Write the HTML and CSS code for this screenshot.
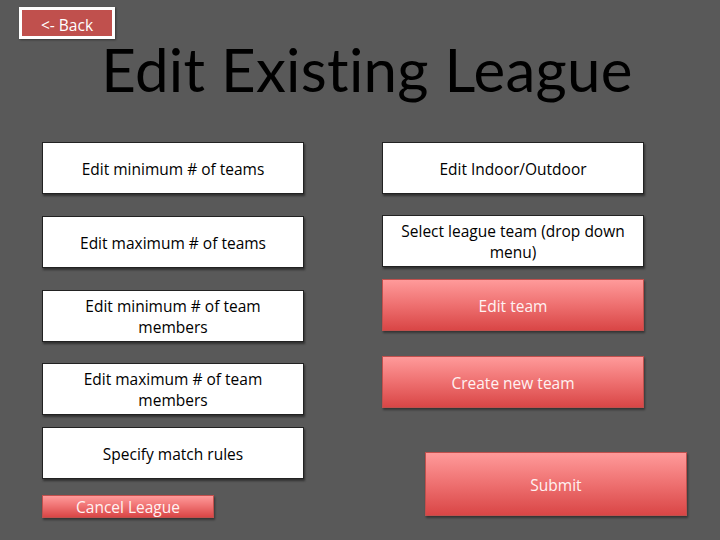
FILE: index.html
```html
<!DOCTYPE html>
<html>
<head>
<meta charset="utf-8">
<link rel="stylesheet" href="styles.css">
</head>
<body>
<div class="page">
  <div class="topbar">
    <button class="back">&lt;- Back</button>
  </div>
  <h1 class="title">Edit Existing League</h1>
  <div class="columns">
    <div class="col col-left">
      <div class="box">Edit minimum # of teams</div>
      <div class="box gap22">Edit maximum # of teams</div>
      <div class="box gap22">Edit minimum # of team<br>members</div>
      <div class="box gap21">Edit maximum # of team<br>members</div>
      <div class="box gap12">Specify match rules</div>
      <div class="cancel">Cancel League</div>
    </div>
    <div class="col col-right">
      <div class="box">Edit Indoor/Outdoor</div>
      <div class="box gap21">Select league team (drop down<br>menu)</div>
      <div class="redbtn gap12">Edit team</div>
      <div class="redbtn gap25">Create new team</div>
      <div class="redbtn submit">Submit</div>
    </div>
  </div>
</div>
</body>
</html>
```

FILE: styles.css
```css
html, body {
  margin: 0;
  padding: 0;
  background: #595959;
}
.page {
  width: 720px;
  height: 540px;
  overflow: hidden;
  font-family: "Open Sans", Lato, sans-serif;
}
.topbar {
  padding: 7px 0 0 19px;
  height: 32px;
}
.back {
  display: block;
  box-sizing: border-box;
  width: 96px;
  height: 32px;
  border: 3px solid #ffffff;
  background: #c0504d;
  color: #ffffff;
  font-family: "Open Sans", Lato, sans-serif;
  font-size: 15.5px;
  padding: 3px 0 0 0;
  box-shadow: 1px 1px 2px rgba(0,0,0,0.4);
}
.title {
  margin: 0;
  padding-left: 14px;
  height: 103px;
  line-height: 60px;
  font-family: Lato, "Open Sans", sans-serif;
  font-size: 60px;
  font-weight: normal;
  text-align: center;
  color: #000000;
  letter-spacing: 0.3px;
}
.columns {
  display: flex;
  padding-left: 42px;
  gap: 78px;
}
.col {
  display: flex;
  flex-direction: column;
  width: 262px;
}
.box {
  box-sizing: border-box;
  height: 52px;
  padding-top: 2px;
  background: #ffffff;
  border: 1px solid #222222;
  box-shadow: 1px 2px 2px rgba(0,0,0,0.45);
  display: flex;
  align-items: center;
  justify-content: center;
  text-align: center;
  font-size: 15.5px;
  line-height: 21px;
  color: #000000;
}
.gap12 { margin-top: 12px; }
.gap21 { margin-top: 21px; }
.gap22 { margin-top: 22px; }
.gap25 { margin-top: 25px; }
.redbtn {
  box-sizing: border-box;
  height: 52px;
  padding-top: 2px;
  background: linear-gradient(to bottom, #ff9a9a 0%, #ee7070 50%, #d94646 100%);
  border: 1px solid #c0504d;
  box-shadow: 1px 2px 2px rgba(0,0,0,0.4);
  display: flex;
  align-items: center;
  justify-content: center;
  font-size: 15.5px;
  color: #fff2f2;
}
.submit {
  margin-top: 44px;
  margin-left: 43px;
  width: 262px;
  height: 64px;
}
.cancel {
  box-sizing: border-box;
  margin-top: 16px;
  width: 172px;
  height: 23px;
  padding-top: 2px;
  background: linear-gradient(to bottom, #ff9a9a 0%, #ee7070 50%, #d94646 100%);
  border: 1px solid #c0504d;
  box-shadow: 1px 2px 2px rgba(0,0,0,0.4);
  display: flex;
  align-items: center;
  justify-content: center;
  font-size: 15.5px;
  line-height: 21px;
  color: #fff2f2;
}
```
